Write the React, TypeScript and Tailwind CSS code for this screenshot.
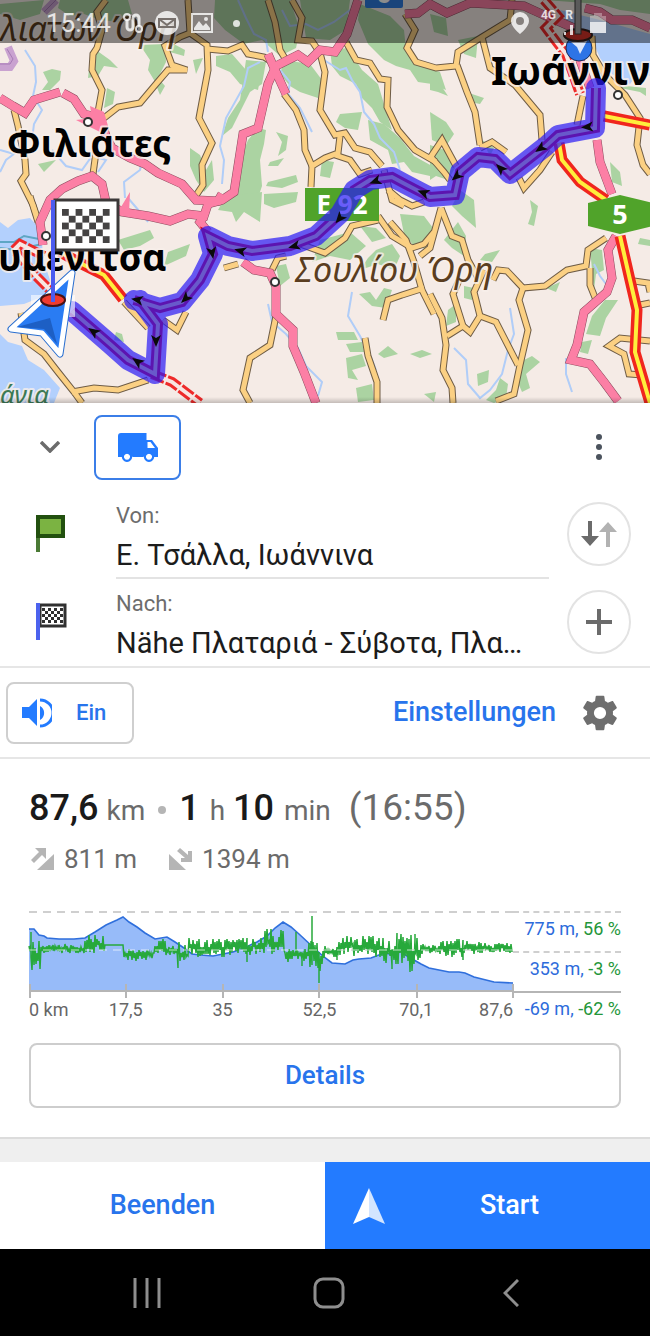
import type { ReactNode } from "react";

/* ---------- map data ---------- */

const FOREST = [
  "43,72 52,69 61,71 60,80 50,90 42,90 48,82",
  "60,0 128,0 132,14 120,22 100,20 84,14 70,16 58,8",
  "96,50 110,60 118,68 104,66 98,76 88,78 90,60",
  "107,88 115,92 113,104 104,108",
  "140,45 165,44 166,62 158,78 165,86 160,95 154,80 148,70 150,60",
  "170,42 185,50 184,56 170,52",
  "193,60 203,58 196,74",
  "38,164 56,160 44,172",
  "190,148 200,155 206,170 212,160 214,180 204,192 196,180 190,166",
  "215,0 290,0 300,30 296,48 280,56 262,40 244,44 225,30 214,18",
  "216,56 232,54 246,70 262,68 258,90 240,84 230,72 216,66",
  "246,60 266,62 262,84 250,92 240,112 232,128 222,136 228,118 240,100",
  "284,60 310,64 322,80 318,98 300,92 290,86 280,74",
  "330,50 348,48 362,70 378,84 384,104 392,130 380,122 372,108 362,98 356,84 340,76 332,66",
  "300,0 350,0 346,30 330,40 306,38",
  "360,4 390,16 404,30 406,50 420,66 440,72 446,90 432,84 418,82 410,70 396,66 384,60 368,44 358,20",
  "340,114 362,112 358,130 345,128 336,122",
  "368,120 384,124 400,138 414,156 432,166 430,176 412,172 404,162 392,164 388,150 370,140",
  "258,128 266,130 264,144 260,160 262,186 256,204 236,206 240,196 232,190 240,160 248,140",
  "276,132 288,136 286,150 278,156 282,142",
  "270,162 284,158 278,166 268,166",
  "268,182 296,175 298,182 282,188 266,186",
  "264,194 298,192 296,202 274,208 264,204",
  "322,160 334,162 330,178 320,176",
  "226,196 262,192 260,222 244,212 236,222 232,212 218,210",
  "430,14 446,18 448,36 434,32",
  "458,40 478,36 476,58 464,54",
  "430,76 440,84 448,96 438,92 430,90",
  "466,92 484,98 480,104 470,102",
  "430,112 446,122 454,134 446,146 432,140",
  "430,145 445,150 455,168 448,180 436,176 430,180",
  "460,190 474,200 476,228 462,216 452,206",
  "482,140 494,148 490,156",
  "620,88 626,86 646,88 646,96 640,92",
  "610,162 620,172 622,186 612,182",
  "530,200 538,206 534,226 528,224 532,212",
  "640,238 650,240 650,246 638,244",
  "485,254 500,250 492,262 480,260",
  "590,248 602,250 604,270 596,274 594,290 592,270",
  "605,300 618,300 606,318 600,336 586,334 592,316",
  "582,342 592,340 588,354 580,352",
  "546,288 560,282 556,292",
  "520,362 532,356 540,362 526,374 530,388 522,392 516,378",
  "500,378 508,384 506,398 494,403 486,400 496,390",
  "448,310 456,304 456,322 446,326",
  "477,374 489,370 488,382 478,386",
  "376,250 392,244 400,256 394,270 378,264 360,270 368,258",
  "400,214 424,216 436,232 430,250 414,246 404,234",
  "360,226 376,228 386,238 372,242",
  "320,240 350,232 366,246 350,260 330,256 312,262",
  "276,266 286,264 290,278 280,286",
  "359,294 370,292 376,300 384,288 392,290 386,308 372,306",
  "336,332 354,332 358,340 338,340",
  "346,344 362,342 364,352 350,352",
  "346,358 362,354 366,366 352,370 358,380 348,378",
  "356,388 372,384 374,400 358,402",
  "378,354 388,346 398,354 384,358",
  "410,354 422,350 432,354 420,358",
  "424,394 436,392 434,402",
  "118,240 150,230 154,238 140,246 124,250",
  "168,252 190,244 186,256 164,266",
  "116,332 122,334 124,342 114,340",
  "0,340 8,352 20,356 26,362 10,362 0,356",
  "0,392 14,392 10,400 0,400",
  "458,222 466,236 464,256 452,248 444,240",
  "464,286 474,288 472,300 464,298",
  "544,0 650,0 650,14 620,10 600,4",
  "0,4 44,0 40,14 20,20 0,14",
];

const WATER = [
  "0,222 8,228 18,220 30,218 41,230 42,244 44,262 50,280 44,296 24,304 0,306",
  "0,334 8,342 22,346 28,360 44,370 60,388 54,403 0,403",
  "560,10 600,20 650,34 650,76 640,70 630,84 612,74 600,58 594,44 576,36",
];

const STREAMS = [
  "25,50 35,66 36,82 33,96 42,110 34,124 32,140",
  "0,172 6,160 14,154 0,150",
  "52,150 66,166 82,170 92,156 106,160 98,172",
  "125,198 124,182 140,170 142,160",
  "128,198 140,212 148,222",
  "260,62 248,68 244,86 226,118 220,146 224,160 222,184",
  "238,0 246,18 254,34 266,40 268,52",
  "280,70 290,82 288,94 300,108 312,132",
  "282,10 290,26 306,24 318,30 334,22 350,10",
  "324,60 340,70 346,68 352,80 360,92 364,112 374,124 380,138 394,152 400,170",
  "352,292 348,316 360,336 372,360 376,370",
  "268,304 272,322 286,334 298,348 306,366 322,382 318,396",
  "454,348 466,360 468,384 480,398 490,390 502,374 508,350 514,334 510,308",
  "566,358 566,374 572,392",
  "594,264 600,276 606,284",
];

const YELLOW_ROADS = [
  "106,0 97,12 102,30 97,48 93,54 92,70 102,90 98,112",
  "104,118 118,107 140,103 156,84 168,70 187,70 172,65 165,46 180,37 190,33",
  "188,0 190,33 207,45 208,70 199,118 212,143 202,165 203,185 195,197",
  "14,110 18,126 25,160 26,174 21,181 33,205 40,226",
  "96,152 93,174",
  "207,49 228,51 242,45 248,54 264,57 272,62",
  "268,0 275,22 280,50 286,60",
  "292,0 302,18 298,40 312,41 320,53 325,72 320,110 335,135 345,133 355,148 370,152 382,166",
  "340,136 338,153 325,158 312,166 311,187",
  "284,94 296,110 304,130 305,150 312,166",
  "346,42 356,60 370,63 380,79 388,80 387,107 398,130 415,150 436,162",
  "405,14 415,30 407,48 416,62 436,68 456,66 458,52 482,37 510,20 512,0",
  "335,155 350,160 360,174 372,170",
  "457,65 467,92 475,112 480,145",
  "482,37 490,68 515,85 540,115 542,140",
  "592,36 593,55 605,75 625,95 640,118 637,145 643,165 650,174",
  "583,96 577,125",
  "430,158 442,140 456,166",
  "430,156 444,172 450,180",
  "480,148 492,142 506,152",
  "519,178 524,188 540,170 552,152",
  "21,313 25,340 44,354 58,372 74,392 82,403",
  "72,392 94,388 118,390 148,380",
  "124,302 148,328",
  "163,320 177,330 186,312",
  "30,196 38,222",
  "276,316 270,345 250,358 243,390 250,403",
  "238,264 224,268",
  "272,270 278,258 286,256",
  "365,338 368,356 377,382 377,403",
  "383,320 388,300 402,295 424,288",
  "300,244 325,253 345,238 352,226 378,220",
  "378,216 392,236 412,248 424,244 434,232",
  "390,222 406,240 414,262 422,290 434,314",
  "388,190 400,200 412,206 424,202",
  "441,208 436,226 430,248 420,256",
  "441,208 452,236 462,240 468,260 478,278",
  "430,294 442,318 446,345 443,370 452,388 453,403",
  "447,336 463,326 458,310 453,294 460,278",
  "463,326 470,332 480,316 474,292 484,270",
  "480,316 496,322 518,365",
  "493,280 498,270 507,271 523,288 545,286 567,270 586,266 588,250 606,238",
  "523,288 519,300 528,330 520,365 514,394 496,401",
  "590,268 590,285 596,300",
  "634,281 648,283 650,292",
  "640,305 650,303",
  "650,341 620,338 609,346 624,354 629,374 642,375",
  "384,170 392,200 404,206",
];

const PINK_ROADS = [
  "0,98 13,106 25,113 34,100 60,92",
  "63,93 74,99 84,114 100,118 106,136 112,148 130,158 145,164 158,173 182,184 196,200 218,201 222,194",
  "43,245 40,222 50,200 62,189 78,181 92,176 102,184 106,202 122,212 148,216 170,221 188,214 204,216 208,204 222,200 234,192 243,134 258,128 268,84 276,66 298,55 308,62 320,50 335,52 347,34 358,0",
  "268,54 275,70 286,94",
  "204,216 200,222 208,232",
  "243,262 254,270 270,273 276,286 276,314 293,330 293,346 304,372 316,403",
  "405,14 418,13 430,4 447,13 470,3 524,6 546,16 574,28",
  "585,8 600,12 612,20 632,20 650,28",
  "597,140 600,162 612,194",
  "616,236 608,250 612,278 607,292 584,312 577,345 571,360 590,364 604,382 618,401",
  "580,60 590,88",
];

const RED_YELLOW = [
  "604,116 650,125",
  "559,143 562,160 580,182 606,200",
  "620,236 630,280 637,310 635,352 650,403",
  "60,252 82,264 104,275 123,299",
];
const RED_WHITE = ["544,0 558,16 546,28 558,44 566,54 580,94", "152,374 172,382 200,403", "14,250 20,244 44,256", "16,252 36,276 52,292"];

const ROUTE = "596,88 595,128 558,135 546,146 510,174 495,159 478,157 460,172 455,195 430,197 405,184 392,177 370,180 354,190 340,214 316,236 290,246 252,251 228,246 208,236 213,254 200,280 182,302 160,308 134,300";
const ROUTE_TAIL = "140,300 158,324 155,374 128,360 110,344 72,311";

const ARROWS: [number, number, number][] = [
  [588, 127, 175], [541, 148, 145], [501, 169, 225], [457, 176, 140], [424, 193, 200],
  [376, 181, 160], [340, 218, 130], [295, 246, 165], [241, 251, 195], [212, 252, 80],
  [186, 298, 135], [138, 300, 190], [156, 340, 90], [138, 362, 215], [94, 332, 215],
];

const TOWNS = [[88, 122], [46, 236], [618, 95], [275, 282]];

function Lines({ items, color, width, dash }: { items: string[]; color: string; width: number; dash?: string }) {
  return (
    <g fill="none" stroke={color} strokeWidth={width} strokeDasharray={dash} strokeLinejoin="miter">
      {items.map((points) => (
        <polyline key={points} points={points} />
      ))}
    </g>
  );
}

function Checks({ x, y, size, color }: { x: number; y: number; size: number; color: string }) {
  const cells: [number, number][] = [];
  for (let r = 0; r < 5; r++) for (let c = 0; c < 7; c++) if ((r + c) % 2 === 0) cells.push([c, r]);
  return (
    <g fill={color}>
      {cells.map(([c, r]) => (
        <rect key={`${c}-${r}`} x={x + c * size} y={y + r * size} width={size} height={size} />
      ))}
    </g>
  );
}

function RouteMap() {
  return (
    <svg
      viewBox="0 0 650 403"
      preserveAspectRatio="xMidYMin slice"
      className="block h-[403px] w-full bg-[#f5ebe6] font-['Noto_Sans',sans-serif]"
      role="img"
      aria-label="Route"
    >
      <defs>
        <linearGradient id="mapEdge" x1="0" y1="0" x2="0" y2="1">
          <stop offset="0" stopColor="#000" stopOpacity="0" />
          <stop offset="1" stopColor="#000" stopOpacity="0.2" />
        </linearGradient>
      </defs>
      <g fill="#abd3a2">{FOREST.map((p) => <polygon key={p} points={p} />)}</g>
      <g fill="#b3d0fd">{WATER.map((p) => <polygon key={p} points={p} />)}</g>
      <path d="M0 242h14l10-6 20 4M0 248l16 2 26-6" stroke="#5ea6c4" strokeWidth="2" fill="none" />
      <path d="M0 67h10l4-6-6-14M44 12L56 0" stroke="#c9a2d0" strokeWidth="8" fill="none" />
      <path d="M0 64h10l3-5-6-10M44 12L56 0" stroke="#a77bb5" strokeWidth="1" fill="none" />
      <Lines items={STREAMS} color="#b0cdf8" width={2} />

      <Lines items={YELLOW_ROADS} color="#6e5c46" width={7} />
      <Lines items={YELLOW_ROADS} color="#fbd083" width={5} />
      <Lines items={PINK_ROADS} color="#8a4a5c" width={9} />
      <Lines items={PINK_ROADS} color="#fc7fa5" width={8} />
      <path d="M90 106l14 6 4 14-8 6-24-12 16-2z M118 212l12-20-1 22z M18 128l8 2" fill="#fc7fa5" />
      <Lines items={RED_WHITE} color="#ee2a2a" width={10} dash="14 2" />
      <Lines items={RED_WHITE} color="#f8e6e2" width={4} />
      <Lines items={RED_YELLOW} color="#f0261e" width={11} />
      <Lines items={RED_YELLOW} color="#ffee3c" width={4} />

      {/* motorway below the route */}
      <Lines items={[ROUTE, ROUTE_TAIL]} color="#d80a10" width={10} />
      <Lines items={[ROUTE, ROUTE_TAIL]} color="#fff06a" width={4} />

      <g fill="#fff" stroke="#333" strokeWidth="2">
        {TOWNS.map(([x, y]) => <circle key={x} cx={x} cy={y} r="4" />)}
      </g>

      <rect x="365" y="-20" width="38" height="28" rx="2" fill="#2f7de0" />
      <text x="384" y="3" textAnchor="middle" fontSize="25" fontWeight="700" fill="#fff">6</text>
      <rect x="305" y="188" width="74" height="33" fill="#50a32a" />
      <text x="342" y="214" textAnchor="middle" fontSize="26" fontWeight="700" fill="#fff">E 92</text>
      <polygon points="588,203 620,195 653,203 653,226 620,234 588,226" fill="#50a32a" />
      <text x="620" y="224" textAnchor="middle" fontSize="27" fontWeight="700" fill="#fff">5</text>

      <g stroke="#f8efeb" strokeOpacity="0.8" strokeWidth="4" paintOrder="stroke" strokeLinejoin="round">
        <g fontSize="37" fontWeight="700" fill="#000">
          <text x="7" y="157">Φιλιάτες</text>
          <text x="-2" y="271">υμενίτσα</text>
          <text x="491" y="85" fontSize="40">Ιωάννινα</text>
        </g>
        <g fontStyle="italic" fill="#5a3d20" fontSize="34">
          <text x="0" y="41">λιατών Όρη</text>
          <text x="295" y="282">Σουλίου Όρη</text>
        </g>
        <text x="0" y="404" fontSize="26" fontStyle="italic" fill="#3c7a55">άγια</text>
      </g>

      <path
        d={`M${ROUTE} M${ROUTE_TAIL}`}
        fill="none"
        stroke="#2818f5"
        strokeWidth="20"
        strokeLinejoin="round"
        strokeLinecap="round"
        opacity="0.7"
      />
      {ARROWS.map(([x, y, a]) => (
        <path key={`${x}-${y}`} d="M7 0L-5 5L-2 0L-5 -5Z" transform={`translate(${x} ${y}) rotate(${a})`} fill="#0a0a0a" />
      ))}

      {/* start */}
      <circle cx="579" cy="48" r="13" fill="#2d74e6" stroke="#1c2f5c" />
      <path d="M571 42l17-3-8 15-3-7z" fill="#dfe9fb" />
      <ellipse cx="578" cy="35" rx="14" ry="6" fill="#d93328" stroke="#33201c" strokeWidth="2" />
      <rect x="575" y="-2" width="6" height="36" fill="#a5a5a5" stroke="#3c3c3c" />

      {/* current position and destination flag */}
      <path d="M31 295h44v22h-44z" fill="#fff" opacity="0.6" />
      <path d="M72 273L11 329L42 333L60 354Z" fill="#2a7cf3" stroke="#2a6fd0" strokeWidth="7" strokeLinejoin="round" />
      <path d="M72 273L11 329L42 333L60 354Z" fill="#2a7cf3" stroke="#fff" strokeWidth="5" strokeLinejoin="round" />
      <path d="M50 318L17 327L44 329L57 344Z" fill="#1d5fc4" />
      <ellipse cx="53" cy="300" rx="12" ry="6" fill="#ef3b30" stroke="#4a1212" strokeWidth="2" />
      <rect x="51" y="200" width="4" height="102" fill="#4c5cf0" />
      <rect x="55" y="200" width="63" height="50" fill="#fff" stroke="#3b3838" strokeWidth="3" />
      <Checks x={62} y={209} size={6.8} color="#454343" />
      <rect x="51" y="200" width="4" height="52" fill="#4c5cf0" />
      <rect x="0" y="397" width="650" height="6" fill="url(#mapEdge)" />
    </svg>
  );
}

function StatusBar() {
  return (
    <div className="absolute inset-x-0 top-0 flex h-[43px] items-center bg-black/45 pt-[3px] pr-11 pl-[46px] text-white/80">
      <span className="text-[26px] leading-8">15:44</span>
      <svg viewBox="0 0 20 20" className="ml-3 h-5 w-5" fill="none" stroke="currentColor" strokeWidth="2">
        <circle cx="4" cy="4" r="3" />
        <circle cx="16" cy="16" r="3" />
        <path d="M4 7v7a3 3 0 0 0 6 0V5a3 3 0 0 1 6 0v8" strokeWidth="3" />
      </svg>
      <svg viewBox="0 0 24 24" className="ml-3 h-6 w-6" fill="currentColor">
        <circle cx="12" cy="12" r="12" />
        <path d="M4 8l8 6 8-6M4 8v8h16V8z" fill="none" stroke="#77706c" strokeWidth="2" />
      </svg>
      <svg viewBox="0 0 22 20" className="ml-3 h-5 w-[22px]" fill="currentColor">
        <path d="M0 0h22v20H0zM2 2v16h18V2z" fillRule="evenodd" />
        <path d="M3 15l5-7 4 5 3-3 4 5v2H3z" />
        <circle cx="15" cy="6" r="2" />
      </svg>
      <span className="ml-5 h-[7px] w-[7px] rounded-full bg-current" />
      <svg viewBox="0 0 18 22" className="ml-auto h-[22px] w-[18px]" fill="currentColor">
        <path d="M9 0a9 9 0 0 0-9 9c0 6 9 13 9 13s9-7 9-13a9 9 0 0 0-9-9zm0 5a4 4 0 1 1 0 8 4 4 0 0 1 0-8z" fillRule="evenodd" />
      </svg>
      <div className="ml-3 flex h-8 gap-2 text-xs font-bold leading-4">
        <span>4G</span>
        <span className="flex flex-col items-center">
          R
          <svg viewBox="0 0 10 12" className="h-3 w-[10px]" fill="currentColor">
            <path d="M0 9h2v3H0zM6 2h3v10H6z" />
          </svg>
        </span>
      </div>
      <svg viewBox="0 0 16 20" className="ml-4 h-5 w-4" fill="currentColor">
        <path d="M4 0h8v3h4v6H0V3h4z" opacity="0.4" />
        <path d="M0 9h16v11H0z" />
      </svg>
    </div>
  );
}

/* ---------- elevation profile ---------- */

const ELEVATION =
  "0,17 5,17 10,23 15,24 18,26 30,27 45,27 56,26 66,20 77,13 88,8 94,5 100,10 108,15 116,21 126,27 138,25 146,30 155,36 163,42 172,43 184,44 194,42 204,40 215,36 228,30 238,24 246,16 254,10 262,15 270,22 285,36 295,45 303,51 316,52 324,48 330,47 342,46 355,41 366,43 372,39 378,44 392,52 400,56 420,60 430,60 436,61 445,65 465,70 484,71";

// from, to, centre, amplitude
const SLOPE_BANDS = [
  [0, 2, 34, 14], [2, 12, 45, 14], [12, 56, 37, 4], [56, 76, 32, 8], [76, 95, 33, 0], [95, 125, 43, 6],
  [125, 138, 36, 8], [138, 148, 38, 4], [148, 160, 43, 11], [160, 200, 36, 8], [200, 235, 34, 8],
  [235, 256, 30, 11], [256, 280, 43, 6], [280, 297, 44, 14], [297, 310, 41, 5], [310, 352, 34, 9],
  [352, 374, 38, 14], [374, 394, 40, 17], [394, 412, 37, 4], [412, 440, 36, 8], [440, 484, 36, 5],
];

const SLOPE_SPIKES: Record<number, number> = {
  2: 20, 149: 53, 218: 50, 267: 20, 273: 54, 283: 4, 290: 71, 308: 48, 363: 57, 368: 22, 386: 22, 434: 48,
};

const slopePath = () => {
  const pts: string[] = [];
  for (const [from, to, mid, amp] of SLOPE_BANDS) {
    for (let x = from; x < to; x++) {
      const n = Math.sin(x * 127.1) * 43758.5;
      const r = n - Math.floor(n);
      const side = x % 2 ? 1 : -1;
      pts.push(`${x},${Math.round(mid + side * amp * r * 1.2)}`);
      if (SLOPE_SPIKES[x]) pts.push(`${x},${SLOPE_SPIKES[x]}`, `${x},${mid}`);
    }
  }
  return pts.join(" ");
};

const LEGEND = [
  { height: "775 m,", slope: "56 %", line: "dashed" },
  { height: "353 m,", slope: "-3 %", line: "dashed" },
  { height: "-69 m,", slope: "-62 %", line: "solid" },
];

function ElevationChart() {
  return (
    <div className="mt-[33px] flex text-lg">
      <div className="min-w-0 flex-1">
        <svg viewBox="0 0 484 88" preserveAspectRatio="none" className="block h-[88px] w-full overflow-visible">
          <path d="M0 0H484" stroke="#cfcfcf" strokeWidth="2" strokeDasharray="8 6" />
          <path d="M0 38H484" stroke="#cfcfcf" strokeWidth="2" strokeDasharray="8 6" />
          <polygon points={`0,79 ${ELEVATION} 484,79`} fill="#97bbf9" />
          <polyline points={ELEVATION} fill="none" stroke="#2f6fdc" strokeWidth="1.6" />
          <polyline points={slopePath()} fill="none" stroke="#27a93b" strokeWidth="1.5" />
          <path d="M0 38H484" stroke="#fff" strokeOpacity="0.7" strokeWidth="1" strokeDasharray="8 6" />
          <path d="M0 79H484M1 72v14M97 72v14M194 72v14M290 72v14M388 72v14M484 72v14" stroke="#b5b5b5" strokeWidth="2" />
        </svg>
        <div className="grid grid-cols-[1fr_2fr_2fr_2fr_2fr_1fr] whitespace-nowrap text-center leading-5 text-[#666]">
          <span className="text-left">0 km</span>
          <span>17,5</span>
          <span>35</span>
          <span>52,5</span>
          <span>70,1</span>
          <span className="text-right">87,6</span>
        </div>
      </div>
      <div className="-mt-px w-[108px]">
        {LEGEND.map(({ height, slope, line }) => (
          <div
            key={height}
            className={`h-10 whitespace-nowrap border-t-2 pt-1 text-right leading-6 ${
              line === "solid" ? "border-solid border-[#b5b5b5]" : "border-dashed border-[#cfcfcf]"
            }`}
          >
            <span className="text-[#2d6bdb]">{height}</span> <span className="text-[#24963a]">{slope}</span>
          </div>
        ))}
      </div>
    </div>
  );
}

/* ---------- route form ---------- */

interface StopProps {
  id: string;
  label: string;
  value: string;
  flag: ReactNode;
  action: string;
  icon: ReactNode;
  underline?: boolean;
}

function StopRow({ id, label, value, flag, action, icon, underline }: StopProps) {
  return (
    <div className="flex h-[88px] pr-[19px] pl-9">
      <div className="w-20 pt-6">{flag}</div>
      <div className={`min-w-0 flex-1 border-b-2 pt-[9px] ${underline ? "border-[#e3e3e3]" : "border-transparent"}`}>
        <label htmlFor={id} className="block text-[22px] leading-8 text-[#6d6d6d]">{label}</label>
        <input id={id} defaultValue={value} className="block h-[45px] w-full truncate text-[29px] text-[#1c1c1c] outline-none" />
      </div>
      <button
        aria-label={action}
        className="mt-[11px] ml-[18px] flex h-16 w-16 items-center justify-center rounded-full border-2 border-[#e3e3e3]"
      >
        {icon}
      </button>
    </div>
  );
}

export default function App() {
  return (
    <div className="flex min-h-screen flex-col overflow-x-hidden bg-white font-[Roboto,'Noto_Sans',sans-serif]">
      <div className="relative">
        <RouteMap />
        <StatusBar />
      </div>

      <div className="flex h-[88px] items-center pr-[31px] pl-9">
        <button aria-label="Einklappen" className="flex h-10 w-7 items-center justify-center">
          <svg viewBox="0 0 20 12" className="h-3 w-5" fill="none" stroke="#6b6b6b" strokeWidth="3.5">
            <path d="M1 1l9 9 9-9" />
          </svg>
        </button>
        <button
          aria-label="LKW"
          className="ml-[30px] flex h-[65px] w-[87px] items-center justify-center rounded-lg border-2 border-[#3b7ee8]"
        >
          <svg viewBox="0 0 40 29" className="h-[29px] w-10" fill="#237bff">
            <path d="M3 0h25.500v7h5.500l6 8v9h-4a5.500 5.500 0 0 0-10.500 0H14.500A5.500 5.500 0 0 0 4 24H0V3a3 3 0 0 1 3-3zM29.500 9v6H37l-4.500-6z" fillRule="evenodd" />
            <path d="M9 18.500a5.200 5.200 0 1 0 .01 0zm0 2.200a3 3 0 1 1-.01 0zM31 18.500a5.200 5.200 0 1 0 .01 0zm0 2.200a3 3 0 1 1-.01 0z" fillRule="evenodd" />
          </svg>
        </button>
        <button aria-label="Mehr" className="ml-auto flex h-10 w-10 items-center justify-center">
          <svg viewBox="0 0 6 26" className="h-[26px] w-[6px]" fill="#4b535d">
            <circle cx="3" cy="3" r="3" />
            <circle cx="3" cy="13" r="3" />
            <circle cx="3" cy="23" r="3" />
          </svg>
        </button>
      </div>

      <StopRow
        id="from"
        label="Von:"
        value="Ε. Τσάλλα, Ιωάννινα"
        action="Tauschen"
        underline
        flag={
          <svg viewBox="0 0 29 37" className="h-[37px] w-[29px]">
            <path d="M0 0h4v37H0z" fill="#4a7a35" />
            <path d="M2 2h25v19H2z" fill="#7bb342" stroke="#22500f" strokeWidth="4" />
          </svg>
        }
        icon={
          <svg viewBox="0 0 36 26" className="h-[26px] w-9">
            <path d="M7 0h4v15h7l-9 10-9-10h7z" fill="#6b6b6b" />
            <path d="M25 26h4V11h7L27 1l-9 10h7z" fill="#b2b2b2" />
          </svg>
        }
      />
      <StopRow
        id="to"
        label="Nach:"
        value="Nähe Πλαταριά - Σύβοτα, Πλα…"
        action="Zwischenziel"
        flag={
          <svg viewBox="0 0 31 37" className="h-[37px] w-[31px]">
            <path d="M4 2h25v21H4z" fill="#fff" stroke="#303030" strokeWidth="3" />
            <Checks x={6} y={5} size={3} color="#303030" />
            <path d="M0 0h4v37H0z" fill="#4c62ee" />
          </svg>
        }
        icon={
          <svg viewBox="0 0 26 26" className="h-[26px] w-[26px]" stroke="#6b6b6b" strokeWidth="4">
            <path d="M13 0v26M0 13h26" />
          </svg>
        }
      />

      <div className="-mt-px flex h-[93px] items-center border-y-2 border-[#e6e6e6] pr-8 pl-[6px]">
        <button className="flex h-[62px] w-32 items-center rounded-lg border-2 border-[#cfcfcf] pl-[14px] text-[22px] font-medium text-[#2874ec]">
          <svg viewBox="0 0 30 30" className="h-[30px] w-[30px]" fill="#237bff">
            <path d="M0 9h7L15 1v27L7 20H0zM18 8a8 8 0 0 1 0 14z" />
            <path d="M18 2a13 13 0 0 1 0 26" fill="none" stroke="#237bff" strokeWidth="3" />
          </svg>
          <span className="ml-6">Ein</span>
        </button>
        <button className="ml-auto flex items-center gap-[26px] text-[27px] font-medium text-[#2874ec]">
          Einstellungen
          <svg viewBox="2 2 20 20" className="h-9 w-9" fill="#6e6e6e">
            <path d="M19.140 12.940c.04-.3.06-.61.06-.94 0-.32-.02-.64-.07-.94l2.030-1.580c.18-.14.23-.41.12-.61l-1.920-3.320c-.12-.22-.37-.29-.59-.22l-2.390.96c-.5-.38-1.030-.7-1.620-.94l-.36-2.540c-.04-.24-.24-.41-.48-.41h-3.840c-.24 0-.43.17-.47.41l-.36 2.540c-.59.24-1.130.57-1.620.94l-2.390-.96c-.22-.08-.47 0-.59.22L2.740 8.870c-.12.21-.08.47.12.61l2.030 1.580c-.05.3-.09.63-.09.94s.02.64.07.94l-2.030 1.580c-.18.14-.23.41-.12.61l1.920 3.320c.12.22.37.29.59.22l2.390-.96c.5.38 1.030.7 1.620.94l.36 2.540c.05.24.24.41.48.41h3.840c.24 0 .44-.17.47-.41l.36-2.540c.59-.24 1.130-.56 1.620-.94l2.390.96c.22.08.47 0 .59-.22l1.920-3.320c.12-.22.07-.47-.12-.61l-2.010-1.580zM12 15.400a3.400 3.400 0 1 1 0-6.800 3.400 3.400 0 0 1 0 6.800z" />
          </svg>
        </button>
      </div>

      <div className="px-[29px] pt-[25px] pb-[29px] text-[#6b6b6b]">
        <p className="flex items-baseline text-[28px] leading-[48px]">
          <b className="text-[36px] font-medium text-[#1a1a1a]">87,6</b>
          <span className="ml-2">km</span>
          <span className="mx-[13px] h-2 w-2 self-center rounded-full bg-[#b5b5b5]" />
          <b className="text-[36px] font-medium text-[#1a1a1a]">1</b>
          <span className="ml-[10px]">h</span>
          <b className="ml-2 text-[36px] font-medium text-[#1a1a1a]">10</b>
          <span className="ml-[10px]">min</span>
          <span className="ml-[18px] text-[37px]">(16:55)</span>
        </p>
        <p className="mt-1 flex items-center text-[26px] leading-10">
          <svg viewBox="0 0 23 22" className="mr-[10px] ml-[2px] h-[22px] w-[23px]" fill="#b5b5b5">
            <path d="M23 6v16H6zM4 0h11v11l-4-4-8 8-3-3 8-8z" />
          </svg>
          811 m
          <svg viewBox="0 0 23 22" className="mr-[10px] ml-8 h-[22px] w-[23px]" fill="#b5b5b5">
            <path d="M0 6v16h17zM8 3l3-3 8 7V3h4v11H12v-4h4z" />
          </svg>
          1394 m
        </p>
        <ElevationChart />
        <button className="mt-3 block h-[65px] w-full rounded-lg border-2 border-[#cdcdcd] text-[26px] font-medium text-[#2874ec]">
          Details
        </button>
      </div>

      <div className="h-[25px] border-t-2 border-[#dcdcdc] bg-[#efefef]" />

      <div className="grid h-[87px] grid-cols-2 text-[27px] font-medium">
        <button className="text-[#2874ec]">Beenden</button>
        <button className="flex items-center bg-[#237bff] pl-7 text-white">
          <svg viewBox="0 0 32 36" className="h-9 w-8">
            <path d="M16 0L0 36l16-7z" fill="#fff" />
            <path d="M16 0l16 36-16-7z" fill="#d3e5ff" />
          </svg>
          <span className="flex-1 pr-4 text-center">Start</span>
        </button>
      </div>

      <nav className="flex h-[87px] items-center justify-center gap-[152px] bg-black pl-2">
        <button aria-label="Letzte Apps">
          <svg viewBox="0 0 28 30" className="h-[30px] w-7" stroke="#8e8e8e" strokeWidth="3">
            <path d="M2 0v30M14 0v30M26 0v30" />
          </svg>
        </button>
        <button aria-label="Home">
          <svg viewBox="0 0 32 32" className="h-8 w-8" fill="none" stroke="#8e8e8e" strokeWidth="3">
            <rect x="2" y="2" width="28" height="28" rx="8" />
          </svg>
        </button>
        <button aria-label="Zurück" className="flex w-7 justify-center">
          <svg viewBox="0 0 16 28" className="h-7 w-4" fill="none" stroke="#8e8e8e" strokeWidth="3">
            <path d="M15 1L2 14l13 13" />
          </svg>
        </button>
      </nav>
    </div>
  );
}
